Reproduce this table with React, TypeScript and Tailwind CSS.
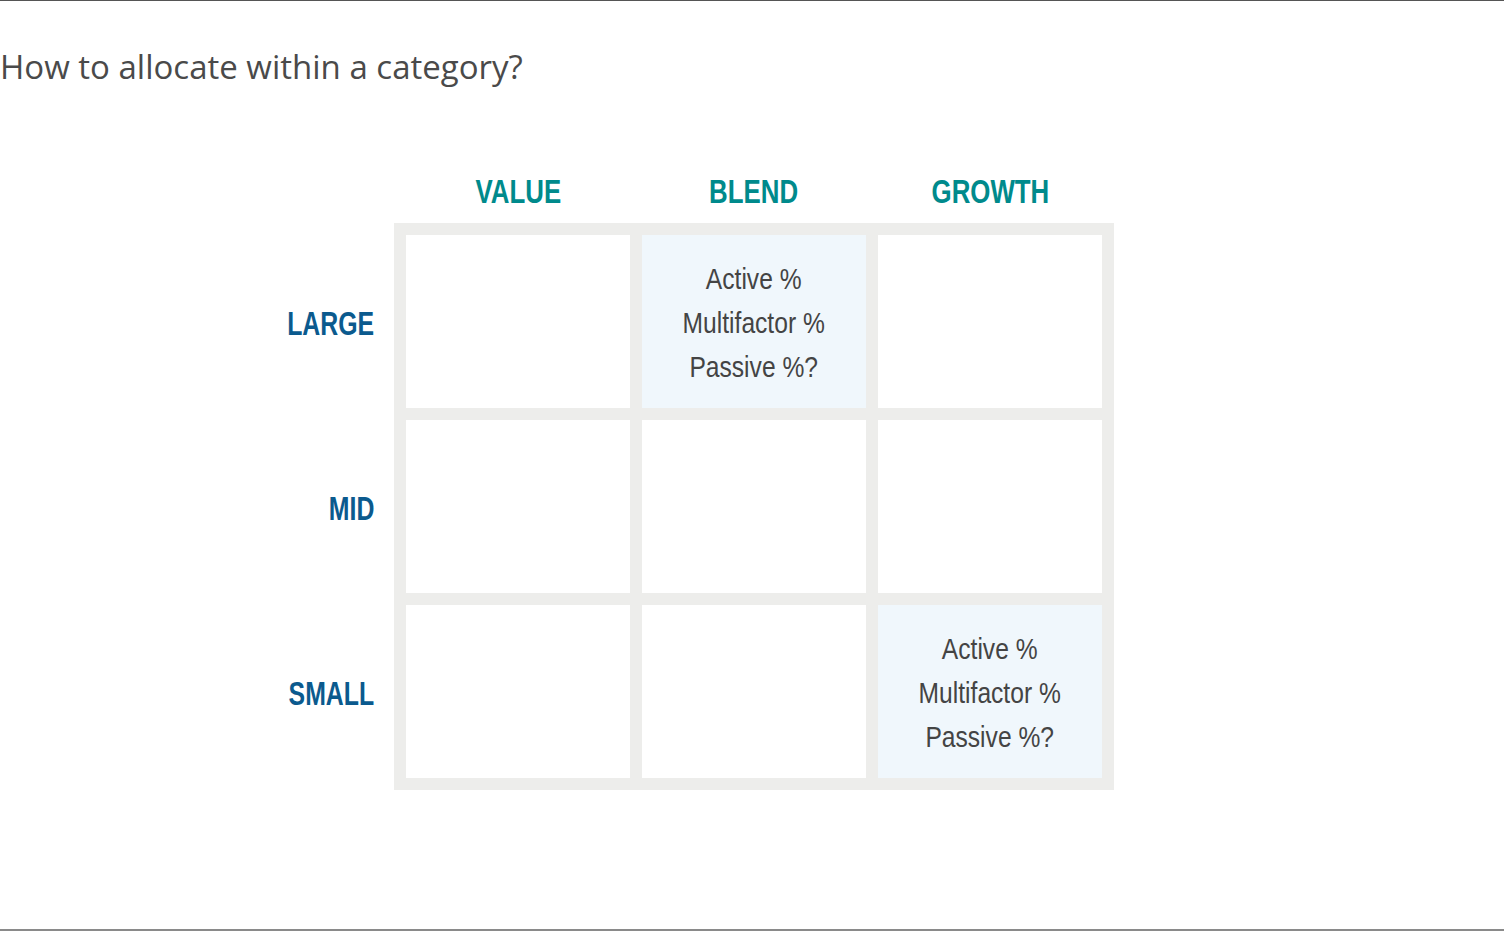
import React from "react";

const cols = ["VALUE", "BLEND", "GROWTH"];
const rows = ["LARGE", "MID", "SMALL"];

// which cells carry the allocation question
const filled: Record<string, boolean> = {
  "LARGE-BLEND": true,
  "SMALL-GROWTH": true,
};

const sans = { fontFamily: '"Liberation Sans", Arial, sans-serif' };

const Cell = ({ active }: { active: boolean }) => {
  if (!active) return <div className="h-[173px] bg-white" />;
  return (
    <div className="h-[173px] bg-[#f0f7fc] flex items-center justify-center">
      <div
        className="flex flex-col items-center scale-x-[0.82] text-[30px] leading-[44px] text-[#444444] pt-[2px]"
        style={sans}
      >
        <span>Active %</span>
        <span>Multifactor %</span>
        <span>Passive %?</span>
      </div>
    </div>
  );
};

const App = () => {
  return (
    <div className="w-[1504px] h-[933px] bg-white border-t border-[#555555] flex flex-col relative">
      <h1
        className="mt-[47px] text-[33px] leading-[38px] text-[#4a4a4a] font-normal"
        style={{ fontFamily: '"Open Sans", "Noto Sans", sans-serif' }}
      >
        How to allocate within a category?
      </h1>

      <div className="mt-[85px] grid grid-cols-[374px_720px] gap-x-5">
        <div />
        <div className="grid grid-cols-3 gap-3 px-3 h-[40px] mb-[12px] items-center">
          {cols.map((c) => (
            <div
              key={c}
              className="text-center text-[34px] leading-[40px] font-bold text-[#008a8c]"
              style={sans}
            >
              <span className="inline-block scale-x-[0.76]">{c}</span>
            </div>
          ))}
        </div>

        <div className="flex flex-col gap-3 py-3">
          {rows.map((r) => (
            <div
              key={r}
              className="h-[173px] flex items-center justify-end pt-[4px] text-[34px] font-bold text-[#0b5a8e]"
              style={sans}
            >
              <span className="inline-block origin-right scale-x-[0.73]">{r}</span>
            </div>
          ))}
        </div>
        <div className="bg-[#ededeb] p-3 grid grid-cols-3 gap-3">
          {rows.map((r) =>
            cols.map((c) => <Cell key={r + c} active={!!filled[`${r}-${c}`]} />)
          )}
        </div>
      </div>

      <div className="absolute left-0 right-0 top-[928px] h-[2px] bg-[#8a8a8a]" />
    </div>
  );
};

export default App;
